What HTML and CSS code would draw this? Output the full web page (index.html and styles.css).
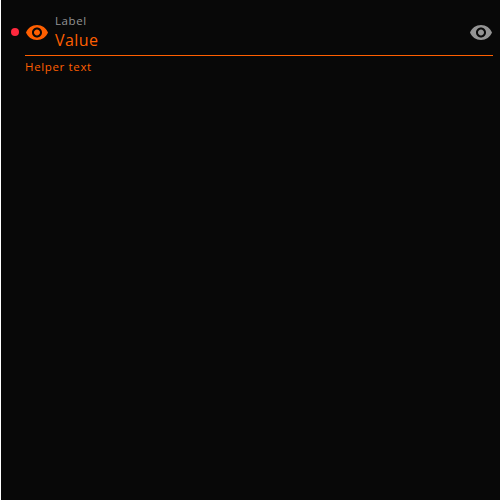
FILE: index.html
```html
<!DOCTYPE html>
<html lang="en">
<head>
<meta charset="utf-8">
<title>Text field</title>
<link rel="stylesheet" href="styles.css">
</head>
<body>
<main class="panel">
  <div class="field">
    <div class="row">
      <span class="dot"></span>
      <svg class="icon icon-lead" viewBox="0 -0.5 24 24"><path d="M12 4.5C7 4.5 2.73 7.61 1 12c1.73 4.39 6 7.5 11 7.5s9.27-3.11 11-7.5c-1.73-4.39-6-7.5-11-7.5zM12 17c-2.76 0-5-2.24-5-5s2.24-5 5-5 5 2.24 5 5-2.24 5-5 5zm0-8c-1.66 0-3 1.34-3 3s1.34 3 3 3 3-1.34 3-3-1.34-3-3-3z"/></svg>
      <div class="text">
        <span class="label">Label</span>
        <span class="value">Value</span>
      </div>
      <svg class="icon icon-trail" viewBox="0 -0.5 24 24"><path d="M12 4.5C7 4.5 2.73 7.61 1 12c1.73 4.39 6 7.5 11 7.5s9.27-3.11 11-7.5c-1.73-4.39-6-7.5-11-7.5zM12 17c-2.76 0-5-2.24-5-5s2.24-5 5-5 5 2.24 5 5-2.24 5-5 5zm0-8c-1.66 0-3 1.34-3 3s1.34 3 3 3 3-1.34 3-3-1.34-3-3-3z"/></svg>
    </div>
    <div class="helper">Helper text</div>
  </div>
</main>
</body>
</html>
```
FILE: styles.css
```css
body {
  margin: 0;
  background: #080808;
  font-family: "Open Sans", "Noto Sans", sans-serif;
}
.panel {
  box-sizing: border-box;
  height: 500px;
  border-left: 1px solid #fff;
  padding: 8px 7px 0 10px;
}
.row {
  display: flex;
  align-items: center;
  height: 47px;
  background: linear-gradient(#ff5f00, #ff5f00) 14px 100% / 100% 1px no-repeat;
  padding-bottom: 1px;
}
.dot {
  width: 8px;
  height: 8px;
  margin-right: 6px;
  border-radius: 50%;
  background: #ff293e;
}
.icon {
  width: 24px;
  height: 24px;
}
.icon-lead { fill: #ff5f00; }
.icon-trail { fill: #949494; }
.text {
  flex: 1;
  display: flex;
  flex-direction: column;
  margin: 0 0 0 6px;
}
.label {
  font-size: 11.5px;
  line-height: 16px;
  letter-spacing: 0.6px;
  color: #949494;
}
.value {
  font-size: 16px;
  line-height: 22px;
  letter-spacing: 0.4px;
  color: #ff5f00;
}
.helper {
  margin: 3px 0 0 14px;
  font-size: 11.5px;
  line-height: 16px;
  letter-spacing: 0.65px;
  color: #ff5f00;
}
```
